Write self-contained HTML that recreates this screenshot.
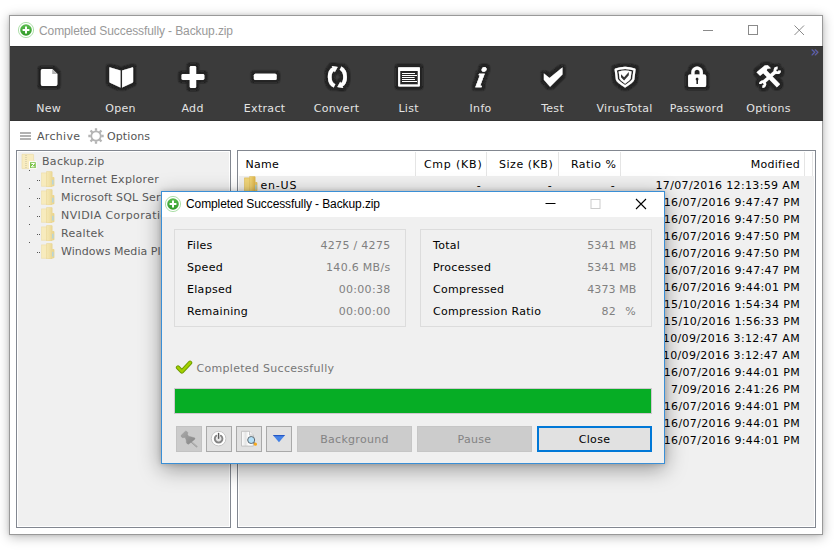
<!DOCTYPE html>
<html><head><meta charset="utf-8"><title>Completed Successfully - Backup.zip</title>
<style>
html,body{margin:0;padding:0;background:#fff;}
body{width:834px;height:555px;position:relative;overflow:hidden;font-family:"DejaVu Sans","Liberation Sans",sans-serif;font-size:11px;letter-spacing:.3px;color:#000;}
.abs{position:absolute;}
#win{position:absolute;left:9px;top:15px;width:812px;height:518px;border:1px solid #999;background:#fff;box-shadow:0 2px 11px rgba(0,0,0,.27),0 0 3px rgba(0,0,0,.12);}
#title{position:absolute;left:0;top:0;width:812px;height:30px;background:#fff;}
.ttxt{position:absolute;font-family:"Liberation Sans",sans-serif;font-size:12px;white-space:nowrap;letter-spacing:-0.1px;}
#tb{position:absolute;left:0;top:30px;width:813px;height:75px;background:#3b3b3b;box-shadow:inset 0 1px 0 #333,inset 0 -1px 0 #343434;}
.tbl{position:absolute;top:56px;padding-left:.6px;width:72px;text-align:center;color:#e4e4e4;font-size:11px;line-height:14px;white-space:nowrap;}
.tbi{position:absolute;filter:drop-shadow(0 0 1.2px #1c1c1c) drop-shadow(0 0 1.2px #1c1c1c) drop-shadow(0 0 1px #1c1c1c);overflow:visible;}
#menu{position:absolute;left:0;top:105px;width:812px;height:29px;color:#555;}
.pane{position:absolute;background:#f0f0f0;border:1px solid #828790;box-shadow:inset 0 0 0 1px #fff;box-sizing:border-box;}
.tr{position:absolute;white-space:nowrap;color:#5a5a5a;line-height:15px;}
.row{position:absolute;left:0;height:17px;line-height:19px;white-space:nowrap;}
.hd{position:absolute;top:1px;height:25px;line-height:25px;white-space:nowrap;}
.sep{position:absolute;top:1px;width:1px;height:24px;background:#e5e5e5;}
#dlg{position:absolute;left:161px;top:191px;width:502px;height:271px;border:1px solid #3a8fd6;background:#f0f0f0;box-shadow:0 5px 20px rgba(0,0,0,.38),0 0 5px rgba(0,0,0,.18);}
.gb{position:absolute;border:1px solid #dcdcdc;box-sizing:border-box;}
.lb{position:absolute;white-space:nowrap;line-height:16px;}
.vl{position:absolute;white-space:nowrap;line-height:16px;color:#808080;text-align:right;}
.btn{position:absolute;box-sizing:border-box;height:26px;line-height:26px;text-align:center;white-space:nowrap;}
</style></head><body>
<div id="win">
  <div id="title">
    <svg class="abs" style="left:7px;top:5px" width="18" height="18" viewBox="0 0 18 18"><circle cx="9" cy="9" r="7.6" fill="#fff" stroke="#a5dba0" stroke-width="0.9"/><circle cx="9" cy="9" r="5.8" fill="url(#gg)"/><path d="M9 5.6v6.8M5.6 9h6.8" stroke="#fff" stroke-width="2"/></svg>
    <div class="ttxt" style="left:29px;top:8px;color:#999;">Completed Successfully - Backup.zip</div>
    <svg class="abs" style="left:690px;top:0" width="122" height="30" viewBox="0 0 122 30"><g stroke="#8a8a8a" stroke-width="1" fill="none"><path d="M3 14.5h10"/><rect x="48.5" y="9.5" width="9" height="9"/><path d="M94.5 9.5l9.5 9.5M104 9.5l-9.5 9.5"/></g></svg>
  </div>
  <div id="tb">
    
    <svg class="abs" style="left:0;top:0" width="812" height="74" viewBox="10 46 812 74">
      <defs><filter id="halo" x="-30%" y="-30%" width="160%" height="160%"><feMorphology in="SourceAlpha" operator="dilate" radius="2" result="d"/><feGaussianBlur in="d" stdDeviation="0.8" result="b"/><feFlood flood-color="#262626"/><feComposite in2="b" operator="in" result="c"/><feMerge><feMergeNode in="c"/><feMergeNode in="c"/><feMergeNode in="c"/><feMergeNode in="SourceGraphic"/></feMerge></filter></defs>
      <g filter="url(#halo)" fill="#fff">
        <!-- New -->
        <g><path d="M42.600 68.900h9.600l5.100 5.100v10.300a1.700 1.700 0 0 1-1.700 1.700h-13a1.700 1.700 0 0 1-1.700-1.700v-13.700a1.700 1.700 0 0 1 1.700-1.700z"/><path d="M52.200 68.900v5.100h5.100z" fill="#b3b3b3"/></g>
        <!-- Open -->
        <g><path d="M109.400 68q0-.9.900-.6l10.100 3.200v16.900l-10.300-4.800q-.7-.3-.7-1z"/><path d="M133.100 68q0-.9-.9-.6l-10.100 3.200v16.900l10.300-4.800q.7-.3.700-1z"/></g>
        <!-- Add -->
        <g><rect x="181.6" y="74.1" width="22.7" height="5.8" rx="1.4"/><rect x="189.8" y="66.1" width="6.3" height="22" rx="1.4"/></g>
        <!-- Extract -->
        <rect x="253.9" y="73.8" width="22.7" height="6.3" rx="1.5"/>
        <!-- Convert -->
        <g fill="none" stroke="#fff" stroke-width="3.700"><path d="M334 68.800C328.200 71.500 328.200 82.700 334.500 85.900"/><path d="M340.600 68.200C346.500 71.400 346.500 82.600 341 85.300"/></g>
        <path d="M331.800 66l5.900 1-3 5.200z"/><path d="M343.200 88l-5.900-1 3-5.200z"/>
        <!-- List -->
        <g><path fill-rule="evenodd" d="M398.1 68a.8.8 0 0 1 .8-.8h20.2a.8.8 0 0 1 .8.8v17.6a.8.8 0 0 1-.8.8h-20.2a.8.8 0 0 1-.8-.8zM400.100 71v13.400h17.800v-13.400z"/><path d="M402 73.500h13M402 75.500h15M402 77.500h12.400M402 79.500h13M402 81.500h15" stroke="#fff" stroke-width="1"/></g>
        <!-- Info -->
        <text x="475" y="87.2" transform="translate(475 87.2) skewX(-11) translate(-475 -87.2)" font-family="'Liberation Serif','DejaVu Serif',serif" font-style="italic" font-weight="bold" font-size="28.500" stroke="#fff" stroke-width=".5" letter-spacing="0">i</text>
        <!-- Test -->
        <path d="M543.9 73.6l5.6 4.3 12.9-10.4v7l-12.3 12.3-6.2-7z"/>
        <!-- VirusTotal -->
        <path fill="none" stroke="#fff" stroke-width="2.1" stroke-linejoin="round" d="M615.700 69.500Q625.100 66.300 634.500 69.500L633.300 79.400Q632.600 81.600 625.100 86.400Q617.600 81.600 616.900 79.400Z"/>
        <path d="M618.700 71.400Q625.100 69.500 631.500 71.400L630.600 78.500Q630 80.300 625.100 83.700Q620.200 80.300 619.600 78.500Z"/>
        <path d="M621 74.300l3.100 3 4.700-5.300v3.200l-4.700 5.300-3.100-3.200z" fill="#353535"/>
        <!-- Password -->
        <g><path fill-rule="evenodd" d="M690 74.400h14.200a1.900 1.900 0 0 1 1.900 1.900v8.900a1.900 1.900 0 0 1-1.900 1.900h-14.200a1.900 1.900 0 0 1-1.900-1.900v-8.900a1.900 1.900 0 0 1 1.900-1.900zM697.100 77.500a1.600 1.600 0 0 0-.9 2.900v3.500h1.800v-3.500a1.600 1.600 0 0 0-.9-2.900z"/><path d="M692.900 75v-2.700a4.200 4.200 0 0 1 8.400 0v2.700" fill="none" stroke="#fff" stroke-width="3.100"/></g>
        <!-- Options -->
        <g><path d="M756.600 72.300L764.800 65.400L767.700 65.300L770.800 68.300L767.300 68.700L766.700 70.600L780 84.200L776.900 87.300L763.200 73.200L760.100 75.700Z"/><path d="M762.900 82.700L776.300 71" stroke="#fff" stroke-width="3.200" fill="none"/><path d="M779.690 70.570A2.400 2.400 0 1 1 777.470 68" stroke="#fff" stroke-width="2.400" fill="none"/><path d="M762.430 86.590A2.400 2.400 0 1 0 760.210 84.030" stroke="#fff" stroke-width="2.400" fill="none"/></g>
      </g>
    </svg>
    <div class="abs" style="left:800.500px;top:-2.500px;color:#6464b4;font-size:15px;line-height:16px;letter-spacing:0;">»</div>
    <div class="tbl" style="left:2px">New</div>
    <div class="tbl" style="left:74px">Open</div>
    <div class="tbl" style="left:146px">Add</div>
    <div class="tbl" style="left:218px">Extract</div>
    <div class="tbl" style="left:290px">Convert</div>
    <div class="tbl" style="left:362px">List</div>
    <div class="tbl" style="left:434px">Info</div>
    <div class="tbl" style="left:506px">Test</div>
    <div class="tbl" style="left:578px">VirusTotal</div>
    <div class="tbl" style="left:650px">Password</div>
    <div class="tbl" style="left:722px">Options</div>
  </div>
  <div id="menu">
    <svg class="abs" style="left:10px;top:11px" width="12" height="8"><path d="M0 1h11M0 4h11M0 7h11" stroke="#b2b2b2" stroke-width="2"/></svg>
    <div class="abs" style="left:27px;top:7.5px;line-height:15px;">Archive</div>
    <svg class="abs" style="left:77px;top:5.5px" width="18" height="18" viewBox="-9 -9 18 18"><g stroke="#b4b4b4" fill="none"><circle r="4.7" stroke-width="1.7"/><g stroke-width="2.3"><path d="M0 -5.2V-7.7M0 5.2V7.7M-5.2 0H-7.7M5.2 0H7.7M3.68 -3.68L5.45 -5.45M-3.68 -3.68L-5.45 -5.45M3.68 3.68L5.45 5.45M-3.68 3.68L-5.45 5.45"/></g></g></svg>
    <div class="abs" style="left:97px;top:7.5px;line-height:15px;letter-spacing:.1px">Options</div>
  </div>
  <div class="pane" id="tree" style="left:6px;top:134px;width:215px;height:378px;overflow:hidden;">
    <svg width="0" height="0" style="position:absolute"><defs><linearGradient id="gg" x1="0" y1="0" x2="0" y2="1"><stop offset="0" stop-color="#5cbd50"/><stop offset="1" stop-color="#2f9a27"/></linearGradient><linearGradient id="fg" x1="0" x2="1" y1="0" y2="0"><stop offset="0" stop-color="#f6e9b8"/><stop offset="1" stop-color="#ecd996"/></linearGradient></defs></svg>
    <svg class="abs" style="left:4px;top:2px" width="17" height="17" viewBox="0 0 17 17"><path d="M1 1.300h11q.6 0 .6.600v5.400l1.200 1v7.300h-12.800z" fill="#f8ecc0" stroke="#ecdca6" stroke-width=".7"/><path d="M5 2v13" stroke="#cfc6a4" stroke-width="1.200" stroke-dasharray="1 1"/><rect x="8" y="8.200" width="7.600" height="7.600" fill="#fff"/><rect x="9" y="9.200" width="5.800" height="5.800" fill="#7fc44c"/><path d="M10.300 10.500h3.200l-3.200 3.300h3.200" stroke="#fff" stroke-width="1" fill="none"/></svg>
    <svg class="abs" style="left:0;top:0" width="40" height="110"><g fill="#555"><rect x="12" y="19" width="1" height="1"/><rect x="12" y="37" width="1" height="1"/><rect x="12" y="55" width="1" height="1"/><rect x="12" y="73" width="1" height="1"/><rect x="12" y="91" width="1" height="1"/><rect x="20" y="29" width="1" height="1"/><rect x="22" y="29" width="1" height="1"/><rect x="20" y="47" width="1" height="1"/><rect x="22" y="47" width="1" height="1"/><rect x="20" y="65" width="1" height="1"/><rect x="22" y="65" width="1" height="1"/><rect x="20" y="83" width="1" height="1"/><rect x="22" y="83" width="1" height="1"/><rect x="20" y="101" width="1" height="1"/><rect x="22" y="101" width="1" height="1"/></g></svg>
    <div class="tr" style="left:25px;top:3px">Backup.zip</div>
<svg class="abs" style="left:24px;top:20px" width="14" height="16" viewBox="0 0 14 16"><path d="M.4 1.9h6v13.4h-6z" fill="#f7ebbd" stroke="#ecdca6" stroke-width=".6"/><path d="M5.6 .4h5q.6 0 .6.6v14.300q0 .6-.6.6h-5z" fill="url(#fg)" stroke="#e6d08c" stroke-width=".5"/><path d="M11.2 6h1.300q.9 0 .9.900v7.600q0 .8-.8.800h-1.400z" fill="#ecd58a"/><rect x="11.3" y="8.800" width="1.200" height="4.800" fill="#a6d4f2"/></svg>
    <div class="tr" style="left:44px;top:21px">Internet Explorer</div>
<svg class="abs" style="left:24px;top:38px" width="14" height="16" viewBox="0 0 14 16"><path d="M.4 1.9h6v13.4h-6z" fill="#f7ebbd" stroke="#ecdca6" stroke-width=".6"/><path d="M5.6 .4h5q.6 0 .6.6v14.300q0 .6-.6.6h-5z" fill="url(#fg)" stroke="#e6d08c" stroke-width=".5"/><path d="M11.2 6h1.300q.9 0 .9.900v7.600q0 .8-.8.800h-1.400z" fill="#ecd58a"/><rect x="11.3" y="8.800" width="1.200" height="4.800" fill="#a6d4f2"/></svg>
    <div class="tr" style="left:44px;top:39px;letter-spacing:.15px">Microsoft SQL Server</div>
<svg class="abs" style="left:24px;top:56px" width="14" height="16" viewBox="0 0 14 16"><path d="M.4 1.9h6v13.4h-6z" fill="#f7ebbd" stroke="#ecdca6" stroke-width=".6"/><path d="M5.6 .4h5q.6 0 .6.6v14.300q0 .6-.6.6h-5z" fill="url(#fg)" stroke="#e6d08c" stroke-width=".5"/><path d="M11.2 6h1.300q.9 0 .9.900v7.600q0 .8-.8.800h-1.400z" fill="#ecd58a"/><rect x="11.3" y="8.800" width="1.200" height="4.800" fill="#a6d4f2"/></svg>
    <div class="tr" style="left:44px;top:57px;letter-spacing:.4px">NVIDIA Corporation</div>
<svg class="abs" style="left:24px;top:74px" width="14" height="16" viewBox="0 0 14 16"><path d="M.4 1.9h6v13.4h-6z" fill="#f7ebbd" stroke="#ecdca6" stroke-width=".6"/><path d="M5.6 .4h5q.6 0 .6.6v14.300q0 .6-.6.6h-5z" fill="url(#fg)" stroke="#e6d08c" stroke-width=".5"/><path d="M11.2 6h1.300q.9 0 .9.900v7.600q0 .8-.8.800h-1.400z" fill="#ecd58a"/><rect x="11.3" y="8.800" width="1.200" height="4.800" fill="#a6d4f2"/></svg>
    <div class="tr" style="left:44px;top:75px">Realtek</div>
<svg class="abs" style="left:24px;top:92px" width="14" height="16" viewBox="0 0 14 16"><path d="M.4 1.9h6v13.4h-6z" fill="#f7ebbd" stroke="#ecdca6" stroke-width=".6"/><path d="M5.6 .4h5q.6 0 .6.6v14.300q0 .6-.6.6h-5z" fill="url(#fg)" stroke="#e6d08c" stroke-width=".5"/><path d="M11.2 6h1.300q.9 0 .9.900v7.600q0 .8-.8.800h-1.400z" fill="#ecd58a"/><rect x="11.3" y="8.800" width="1.200" height="4.800" fill="#a6d4f2"/></svg>
    <div class="tr" style="left:44px;top:93px;letter-spacing:.05px">Windows Media Player</div>
  </div>
  <div class="pane" id="list" style="left:227px;top:134px;width:579px;height:378px;overflow:hidden;">
    <div class="abs" style="left:0;top:0;width:577px;height:25px;background:#fff"></div>
    <div class="sep" style="left:177px"></div>
    <div class="sep" style="left:248px"></div>
    <div class="sep" style="left:320px"></div>
    <div class="sep" style="left:382px"></div>
    <div class="sep" style="left:566px"></div>
    <div class="sep" style="left:574px"></div>
    <div class="hd" style="left:7.500px">Name</div>
    <div class="hd" style="right:332.500px;letter-spacing:.8px">Cmp (KB)</div>
    <div class="hd" style="right:261.700px;letter-spacing:.55px">Size (KB)</div>
    <div class="hd" style="right:198.700px;letter-spacing:.45px">Ratio %</div>
    <div class="hd" style="right:15px">Modified</div>
    <div class="row" style="top:25px;width:577px"><svg class="abs" style="left:5.500px;top:0px" width="14" height="16" viewBox="0 0 14 16"><defs><linearGradient id="fg2" x1="0" x2="1" y1="0" y2="0"><stop offset="0" stop-color="#f2d77c"/><stop offset="1" stop-color="#deb448"/></linearGradient></defs><path d="M.4 1.900h6v13.400h-6z" fill="#f0d478" stroke="#dcb850" stroke-width=".6"/><path d="M5.600 .4h5q.6 0 .6.6v14.300q0 .6-.6.6h-5z" fill="url(#fg2)" stroke="#dcb850" stroke-width=".5"/><path d="M11.200 6h1.300q.9 0 .9.900v7.600q0 .8-.8.800h-1.400z" fill="#e4bf58"/><rect x="11.300" y="8.800" width="1.200" height="4.800" fill="#8ecbf2"/></svg><span class="abs" style="left:22.500px;letter-spacing:.8px">en-US</span><span class="abs" style="right:334px">-</span><span class="abs" style="right:263px">-</span><span class="abs" style="right:200px">-</span><span class="abs" style="right:15px;letter-spacing:.35px">17/07/2016 12:13:59 AM</span></div>
    <div class="row" style="top:42px;width:577px"><span class="abs" style="right:15px;letter-spacing:.35px">16/07/2016 9:47:47 PM</span></div>
    <div class="row" style="top:59px;width:577px"><span class="abs" style="right:15px;letter-spacing:.35px">16/07/2016 9:47:50 PM</span></div>
    <div class="row" style="top:76px;width:577px"><span class="abs" style="right:15px;letter-spacing:.35px">16/07/2016 9:47:50 PM</span></div>
    <div class="row" style="top:93px;width:577px"><span class="abs" style="right:15px;letter-spacing:.35px">16/07/2016 9:47:50 PM</span></div>
    <div class="row" style="top:110px;width:577px"><span class="abs" style="right:15px;letter-spacing:.35px">16/07/2016 9:47:47 PM</span></div>
    <div class="row" style="top:127px;width:577px"><span class="abs" style="right:15px;letter-spacing:.35px">16/07/2016 9:44:01 PM</span></div>
    <div class="row" style="top:144px;width:577px"><span class="abs" style="right:15px;letter-spacing:.35px">15/10/2016 1:54:34 PM</span></div>
    <div class="row" style="top:161px;width:577px"><span class="abs" style="right:15px;letter-spacing:.35px">15/10/2016 1:56:33 PM</span></div>
    <div class="row" style="top:178px;width:577px"><span class="abs" style="right:15px;letter-spacing:.35px">10/09/2016 3:12:47 AM</span></div>
    <div class="row" style="top:195px;width:577px"><span class="abs" style="right:15px;letter-spacing:.35px">10/09/2016 3:12:47 AM</span></div>
    <div class="row" style="top:212px;width:577px"><span class="abs" style="right:15px;letter-spacing:.35px">16/07/2016 9:44:01 PM</span></div>
    <div class="row" style="top:229px;width:577px"><span class="abs" style="right:15px;letter-spacing:.35px">7/09/2016 2:41:26 PM</span></div>
    <div class="row" style="top:246px;width:577px"><span class="abs" style="right:15px;letter-spacing:.35px">16/07/2016 9:44:01 PM</span></div>
    <div class="row" style="top:263px;width:577px"><span class="abs" style="right:15px;letter-spacing:.35px">16/07/2016 9:44:01 PM</span></div>
    <div class="row" style="top:280px;width:577px"><span class="abs" style="right:15px;letter-spacing:.35px">16/07/2016 9:44:01 PM</span></div>
  </div>
</div>
<div id="dlg">
  <div class="abs" style="left:0;top:0;width:502px;height:25px;background:#fff"></div>
  <svg class="abs" style="left:2px;top:3px" width="18" height="18" viewBox="0 0 18 18"><circle cx="9" cy="9" r="7.600" fill="#fff" stroke="#a5dba0" stroke-width="0.900"/><circle cx="9" cy="9" r="5.800" fill="url(#gg)"/><path d="M9 5.600v6.800M5.600 9h6.800" stroke="#fff" stroke-width="2"/></svg>
  <div class="ttxt" style="left:24px;top:5px;color:#000;">Completed Successfully - Backup.zip</div>
  <svg class="abs" style="left:380px;top:-1px" width="122" height="25" viewBox="0 0 122 25"><g stroke-width="1" fill="none"><path d="M3.500 12.500h10" stroke="#000"/><rect x="49" y="8.500" width="9" height="9" stroke="#ccc"/><path d="M94 8l10 10M104 8l-10 10" stroke="#000" stroke-width="1.100"/></g></svg>
  <div class="gb" style="left:12px;top:37px;width:232px;height:98px"></div>
  <div class="gb" style="left:258px;top:37px;width:232px;height:98px"></div>
  <div class="lb" style="left:25px;top:46px">Files</div><div class="vl" style="right:273.5px;top:46px">4275 / 4275</div>
  <div class="lb" style="left:271px;top:46px">Total</div><div class="vl" style="letter-spacing:.1px;right:27.5px;top:46px">5341 MB</div>
  <div class="lb" style="left:25px;top:68px">Speed</div><div class="vl" style="right:273.5px;top:68px">140.6 MB/s</div>
  <div class="lb" style="left:271px;top:68px">Processed</div><div class="vl" style="letter-spacing:.1px;right:27.5px;top:68px">5341 MB</div>
  <div class="lb" style="left:25px;top:90px">Elapsed</div><div class="vl" style="right:273.5px;top:90px">00:00:38</div>
  <div class="lb" style="left:271px;top:90px">Compressed</div><div class="vl" style="letter-spacing:.1px;right:27.5px;top:90px">4373 MB</div>
  <div class="lb" style="left:25px;top:112px">Remaining</div><div class="vl" style="right:273.5px;top:112px">00:00:00</div>
  <div class="lb" style="left:271px;top:112px">Compression Ratio</div><div class="vl" style="right:27.5px;top:112px">82<span style="margin-left:9px;margin-right:.6px">%</span></div>
  <svg class="abs" style="left:13px;top:167px" width="20" height="18" viewBox="175 359 20 18"><path d="M178 367.500l3.900 4 8.200-8.800" fill="none" stroke="#6d9a00" stroke-width="4.300" stroke-linejoin="round" stroke-linecap="round"/><path d="M178 367.500l3.900 4 8.200-8.800" fill="none" stroke="#a3d000" stroke-width="2.500" stroke-linejoin="round" stroke-linecap="round"/></svg>
  <div class="lb" style="left:34.5px;top:169px;color:#777">Completed Successfully</div>
  <div class="abs" style="left:12px;top:196px;width:477.5px;height:26px;box-sizing:border-box;border:1px solid #cfc8cf;background:#06ad25"></div>
  <div class="btn" style="left:14px;top:234px;width:26px;background:#cbcbcb;border:1px solid #c2c2c2"><svg class="abs" style="left:-1px;top:-1px" width="26" height="26" viewBox="176 426 26 26"><defs><linearGradient id="pg" x1="0" y1="0" x2="1" y2="1"><stop offset="0" stop-color="#a9a9a9"/><stop offset="1" stop-color="#858585"/></linearGradient></defs><path d="M191.200 441.800l5.500 4.800" stroke="#9a9a9a" stroke-width="1.500" stroke-linecap="round"/><path d="M191.600 441.600l5 4.500" stroke="#c8c8c8" stroke-width=".6" stroke-linecap="round"/><path d="M181.060 435.430L185.430 431.210Q186.900 430.800 187.890 432.740L187.350 434.280L188.500 436.200L191.570 436.970L194.870 437.960Q195.300 439 194.260 439.810L188.500 444.260Q187.200 444.200 186.430 442.720L186.200 440.040L185.050 437.350L182.740 437.730Q180.900 437.100 181.060 435.430Z" fill="url(#pg)" stroke="#8e8e8e" stroke-width=".4" stroke-linejoin="round"/></svg></div>
  <div class="btn" style="left:44px;top:234px;width:26px;background:#e1e1e1;border:1px solid #a9a9a9"><svg class="abs" style="left:-1px;top:-1px" width="26" height="26" viewBox="206 426 26 26"><circle cx="218.600" cy="438.600" r="7.300" fill="#fff" stroke="#c6c6c6" stroke-width="1"/><circle cx="218.600" cy="438.800" r="2.600" fill="#e6e6e6"/><path d="M216.300 435.700a3.800 3.800 0 1 0 4.600 0" fill="none" stroke="#858585" stroke-width="2" stroke-linecap="round"/><path d="M218.600 433.400v4.800" stroke="#5c5c5c" stroke-width="1.400" stroke-linecap="round"/></svg></div>
  <div class="btn" style="left:74px;top:234px;width:26px;background:#e1e1e1;border:1px solid #a9a9a9"><svg class="abs" style="left:-1px;top:-1px" width="26" height="26" viewBox="236 426 26 26"><defs><linearGradient id="dg" x1="0" y1="0" x2="1" y2="0"><stop offset="0" stop-color="#ffffff"/><stop offset=".35" stop-color="#e4e4e4"/><stop offset=".6" stop-color="#ffffff"/></linearGradient></defs><path d="M241.500 431.300h8l3.800 3.800v11h-11.800z" fill="url(#dg)" stroke="#bdbdbd" stroke-width=".9"/><path d="M249.500 431.300v3.800h3.800" fill="#f4f4f4" stroke="#bdbdbd" stroke-width=".8"/><path d="M253.600 442.600l1.700 1.600" stroke="#666" stroke-width="1.400"/><circle cx="251.200" cy="440" r="3.500" fill="#b4e0f8" stroke="#5f6a72" stroke-width="1"/><circle cx="255.400" cy="444.200" r="1.600" fill="#f6a81c"/></svg></div>
  <div class="btn" style="left:104px;top:234px;width:26px;background:#e1e1e1;border:1px solid #a9a9a9"><svg class="abs" style="left:-1px;top:-1px" width="26" height="26" viewBox="266 426 26 26"><defs><linearGradient id="bg" x1="0" y1="0" x2="0" y2="1"><stop offset="0" stop-color="#1846b8"/><stop offset=".25" stop-color="#4a86e8"/><stop offset="1" stop-color="#3c7ce4"/></linearGradient></defs><path d="M272.800 435h12.400l-6.200 7.200z" fill="url(#bg)"/></svg></div>
  <div class="btn" style="left:135px;top:234px;width:115px;background:#cccccc;border:1px solid #c6c6c6;color:#838383">Background</div>
  <div class="btn" style="left:255px;top:234px;width:115px;background:#cccccc;border:1px solid #c6c6c6;color:#838383">Pause</div>
  <div class="btn" style="left:375px;top:234px;width:115px;background:#e1e1e1;border:2px solid #0078d7;line-height:24px;color:#000">Close</div>
</div>
</body></html>
